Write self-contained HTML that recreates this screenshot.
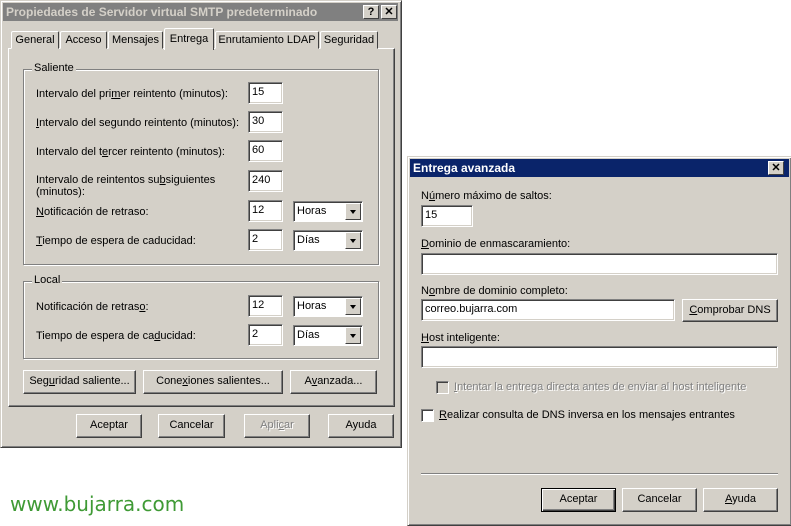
<!DOCTYPE html>
<html><head><meta charset="utf-8"><style>
*{margin:0;padding:0;box-sizing:border-box}
body{width:791px;height:526px;background:#fff;position:relative;overflow:hidden;font-family:"Liberation Sans",Arial,sans-serif;font-size:11px;color:#000}
.a{position:absolute}
.dlg{background:#d4d0c8;border:1px solid;border-color:#d4d0c8 #404040 #404040 #d4d0c8;box-shadow:inset 1px 1px #fff,inset -1px -1px #808080}
.tb{position:absolute;height:18px;font-weight:bold;font-size:12px;line-height:18px;padding-left:3px}
.in{position:absolute;background:#fff;border:1px solid;border-color:#808080 #fff #fff #808080;box-shadow:inset 1px 1px #404040,inset -1px -1px #d4d0c8;padding:2px 3px;line-height:15px;font-size:11px}
.btn{position:absolute;background:#d4d0c8;border:1px solid;border-color:#fff #404040 #404040 #fff;box-shadow:inset -1px -1px #808080;text-align:center;line-height:21px}
.grp{position:absolute;border:1px solid #808080;box-shadow:1px 1px #fff,inset 1px 1px #fff}
.gl{position:absolute;background:#d4d0c8;padding:0 2px;top:-8px;left:8px}
.sel{position:absolute;background:#fff;border:1px solid;border-color:#808080 #fff #fff #808080;box-shadow:inset 1px 1px #404040;padding:2px 3px;line-height:15px}
.arr{position:absolute;right:1px;top:1px;width:16px;height:17px;background:#d4d0c8;border:1px solid;border-color:#fff #404040 #404040 #fff}
.arr:after{content:"";position:absolute;left:4px;top:6px;border:3.5px solid transparent;border-top:4px solid #000}
.tab{position:absolute;top:31px;height:18px;border:1px solid;border-color:#fff #404040 transparent #fff;border-radius:2px 2px 0 0;text-align:center;line-height:16px;background:#d4d0c8}
.tbb{position:absolute;width:16px;height:14px;background:#d4d0c8;border:1px solid;border-color:#fff #404040 #404040 #fff;font-weight:bold;font-size:11px;line-height:12px;text-align:center;color:#000}
u{text-decoration:underline}
.cb{position:absolute;width:13px;height:13px;background:#fff;border:1px solid;border-color:#808080 #fff #fff #808080;box-shadow:inset 1px 1px #404040}
</style></head><body>

<!-- Left dialog -->
<div class="a dlg" style="left:0;top:0;width:402px;height:448px"></div>
<div class="tb" style="left:3px;top:3px;width:395px;background:#808080;color:#d4d0c8">Propiedades de Servidor virtual SMTP predeterminado</div>
<div class="tbb" style="left:363px;top:5px">?</div>
<div class="tbb" style="left:381px;top:5px">✕</div>

<div class="a" style="left:8px;top:48px;width:387px;height:359px;border:1px solid;border-color:#fff #404040 #404040 #fff;box-shadow:inset -1px -1px #808080"></div>
<div class="tab" style="left:11px;width:48px">General</div>
<div class="tab" style="left:60px;width:47px">Acceso</div>
<div class="tab" style="left:108px;width:55px">Mensajes</div>
<div class="tab" style="left:215px;width:104px">Enrutamiento LDAP</div>
<div class="tab" style="left:320px;width:58px">Seguridad</div>
<div class="tab" style="left:164px;top:28px;width:50px;height:22px;border-bottom:none;line-height:20px">Entrega</div>

<div class="grp" style="left:23px;top:69px;width:356px;height:196px"><span class="gl">Saliente</span></div>
<div class="a" style="left:36px;top:88px">Intervalo del pri<u>m</u>er reintento (minutos):</div>
<div class="in" style="left:248px;top:82px;width:35px;height:22px">15</div>
<div class="a" style="left:36px;top:117px"><u>I</u>ntervalo del segundo reintento (minutos):</div>
<div class="in" style="left:248px;top:111px;width:35px;height:22px">30</div>
<div class="a" style="left:36px;top:146px">Intervalo del t<u>e</u>rcer reintento (minutos):</div>
<div class="in" style="left:248px;top:140px;width:35px;height:22px">60</div>
<div class="a" style="left:36px;top:174px;line-height:12px">Intervalo de reintentos su<u>b</u>siguientes<br>(minutos):</div>
<div class="in" style="left:248px;top:170px;width:35px;height:22px">240</div>
<div class="a" style="left:36px;top:206px"><u>N</u>otificación de retraso:</div>
<div class="in" style="left:248px;top:200px;width:35px;height:22px">12</div>
<div class="sel" style="left:293px;top:201px;width:70px;height:21px">Horas<div class="arr"></div></div>
<div class="a" style="left:36px;top:235px"><u>T</u>iempo de espera de caducidad:</div>
<div class="in" style="left:248px;top:229px;width:35px;height:22px">2</div>
<div class="sel" style="left:293px;top:230px;width:70px;height:21px">Días<div class="arr"></div></div>

<div class="grp" style="left:23px;top:281px;width:356px;height:78px"><span class="gl">Local</span></div>
<div class="a" style="left:36px;top:301px">Notificación de retras<u>o</u>:</div>
<div class="in" style="left:248px;top:295px;width:35px;height:22px">12</div>
<div class="sel" style="left:293px;top:296px;width:70px;height:21px">Horas<div class="arr"></div></div>
<div class="a" style="left:36px;top:330px">Tiempo de espera de ca<u>d</u>ucidad:</div>
<div class="in" style="left:248px;top:324px;width:35px;height:22px">2</div>
<div class="sel" style="left:293px;top:325px;width:70px;height:21px">Días<div class="arr"></div></div>

<div class="btn" style="left:23px;top:370px;width:113px;height:24px">Seg<u>u</u>ridad saliente...</div>
<div class="btn" style="left:143px;top:370px;width:140px;height:24px">Cone<u>x</u>iones salientes...</div>
<div class="btn" style="left:290px;top:370px;width:87px;height:24px">A<u>v</u>anzada...</div>

<div class="btn" style="left:76px;top:414px;width:66px;height:24px">Aceptar</div>
<div class="btn" style="left:158px;top:414px;width:67px;height:24px">Cancelar</div>
<div class="btn" style="left:244px;top:414px;width:66px;height:24px;color:#808080;text-shadow:1px 1px #fff">Apli<u>c</u>ar</div>
<div class="btn" style="left:328px;top:414px;width:66px;height:24px">Ayuda</div>

<div class="a" style="left:10px;top:492px;font-family:'DejaVu Sans',sans-serif;font-size:20px;color:#3f9a35">www.bujarra.com</div>

<!-- Right dialog -->
<div class="a dlg" style="left:407px;top:156px;width:385px;height:370px"></div>
<div class="tb" style="left:410px;top:159px;width:379px;background:#0a246a;color:#fff">Entrega avanzada</div>
<div class="tbb" style="left:768px;top:161px">✕</div>

<div class="a" style="left:421px;top:190px">N<u>ú</u>mero máximo de saltos:</div>
<div class="in" style="left:421px;top:205px;width:52px;height:22px">15</div>
<div class="a" style="left:421px;top:238px"><u>D</u>ominio de enmascaramiento:</div>
<div class="in" style="left:421px;top:253px;width:357px;height:22px"></div>
<div class="a" style="left:421px;top:285px">N<u>o</u>mbre de dominio completo:</div>
<div class="in" style="left:421px;top:299px;width:254px;height:22px">correo.bujarra.com</div>
<div class="btn" style="left:682px;top:299px;width:96px;height:23px"><u>C</u>omprobar DNS</div>
<div class="a" style="left:421px;top:332px"><u>H</u>ost inteligente:</div>
<div class="in" style="left:421px;top:346px;width:357px;height:22px"></div>
<div class="cb" style="left:436px;top:381px;background:#d4d0c8"></div>
<div class="a" style="left:454px;top:381px;color:#808080;text-shadow:1px 1px #fff"><u>I</u>ntentar la entrega directa antes de enviar al host inteligente</div>
<div class="cb" style="left:421px;top:409px"></div>
<div class="a" style="left:439px;top:409px"><u>R</u>ealizar consulta de DNS inversa en los mensajes entrantes</div>
<div class="a" style="left:421px;top:473px;width:357px;height:2px;border-top:1px solid #808080;border-bottom:1px solid #fff"></div>
<div class="btn" style="left:541px;top:488px;width:75px;height:24px;border:1px solid #000;box-shadow:inset 1px 1px #fff,inset -1px -1px #404040,inset -2px -2px #808080">Aceptar</div>
<div class="btn" style="left:622px;top:488px;width:75px;height:24px">Cancelar</div>
<div class="btn" style="left:703px;top:488px;width:75px;height:24px"><u>A</u>yuda</div>
</body></html>
